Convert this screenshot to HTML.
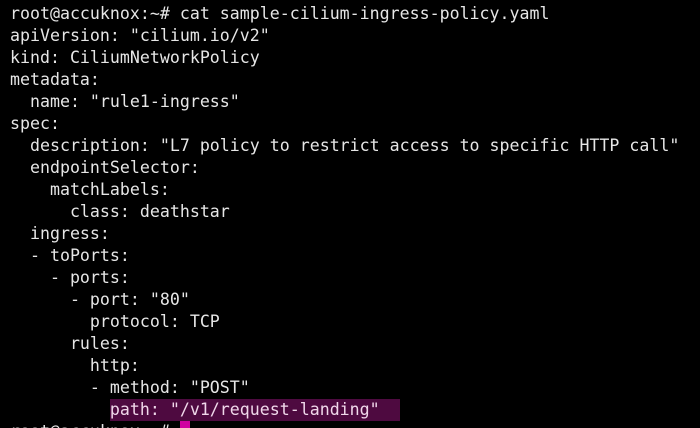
<!DOCTYPE html>
<html><head><style>
html,body{margin:0;padding:0;background:#000;width:700px;height:428px;overflow:hidden}
#w{position:relative;width:700px;height:428px;overflow:hidden;background:#000}
pre{margin:0;position:absolute;left:10px;top:3px;font-family:"DejaVu Sans Mono","Liberation Mono",monospace;font-size:16.6px;line-height:22px;color:#e6e6e6;white-space:pre}
.hl{background:#4e0a40;color:#f0d8ea;display:inline-block;width:290px}
.cur{display:inline-block;width:10px;height:22px;background:#d000a0;vertical-align:top}
</style></head><body><div id="w">
<pre>root@accuknox:~# cat sample-cilium-ingress-policy.yaml
apiVersion: "cilium.io/v2"
kind: CiliumNetworkPolicy
metadata:
  name: "rule1-ingress"
spec:
  description: "L7 policy to restrict access to specific HTTP call"
  endpointSelector:
    matchLabels:
      class: deathstar
  ingress:
  - toPorts:
    - ports:
      - port: "80"
        protocol: TCP
      rules:
        http:
        - method: "POST"
          <span class="hl">path: "/v1/request-landing"</span>
root@accuknox:~# <span class="cur"></span></pre>
</div></body></html>
